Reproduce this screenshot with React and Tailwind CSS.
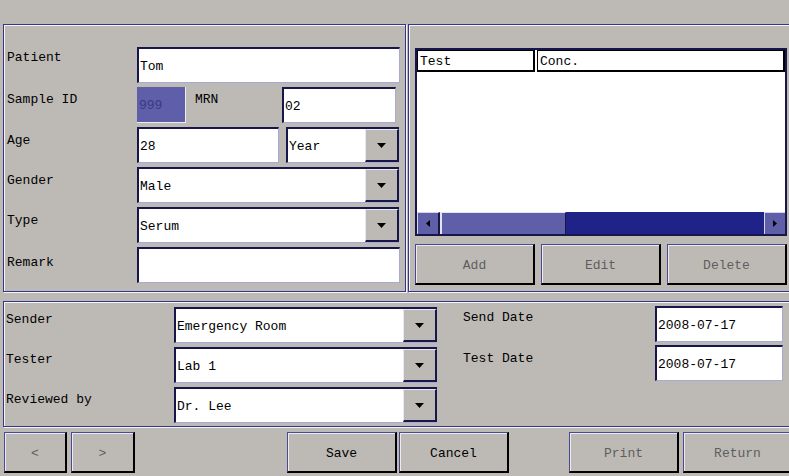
import React from 'react';

const sunken =
  'bg-white border-t-2 border-l-2 border-b border-r border-t-[#16164a] border-l-[#16164a] border-b-[#a9a9d6] border-r-[#a9a9d6]';

const Field = ({ value, className = '' }) => (
  <div className={`h-[36px] shrink-0 flex items-center pl-[1px] pt-[2px] ${sunken} ${className}`}>
    {value}
  </div>
);

const Arrow = () => (
  <svg width="9" height="5" viewBox="0 0 9 5">
    <polygon points="0,0 9,0 4.5,5" fill="#000" />
  </svg>
);

const Select = ({ value, className = '' }) => (
  <div
    className={`h-[36px] shrink-0 flex bg-white border-t-2 border-l-2 border-b border-t-[#16164a] border-l-[#16164a] border-b-[#a9a9d6] ${className}`}
  >
    <div className="flex-1 flex items-center pl-[1px] pt-[2px]">{value}</div>
    <div className="w-[34px] h-full flex items-center justify-center bg-[#bdbab6] border-l border-t border-l-[#e8e8f4] border-t-[#e8e8f4] border-r-2 border-b-2 border-r-[#16164a] border-b-[#16164a]">
      <Arrow />
    </div>
  </div>
);

const Button = ({ label, disabled, className = '' }) => (
  <div
    className={`h-[41px] shrink-0 flex items-center justify-center pt-[3px] bg-[#bdbab6] border-t border-l border-t-[#4a4a94] border-l-[#4a4a94] border-b-2 border-r-2 border-b-black border-r-black shadow-[inset_1px_1px_0_#ecebf2] ${
      disabled ? 'text-[#5e5e5e]' : 'text-black'
    } ${className}`}
  >
    {label}
  </div>
);

const Label = ({ children, className = '' }) => (
  <div className={`leading-[16px] shrink-0 ${className}`}>{children}</div>
);

const panel =
  'border border-[#35358a] shadow-[inset_1px_1px_0_#f4f4fa,1px_1px_0_#f4f4fa]';

export default function App() {
  return (
    <div className="w-[789px] h-[476px] overflow-hidden bg-[#bdbab6] text-[13px] text-black font-['Liberation_Mono',monospace]">
      {/* top area */}
      <div className="flex gap-[2px] pt-[24px] pl-[3px] h-[292px]">
        {/* patient info */}
        <div className={`w-[403px] h-[268px] shrink-0 pl-[3px] pt-[22px] flex flex-col gap-[4px] ${panel}`}>
          <div className="flex">
            <Label className="w-[130px] pt-[3px]">Patient</Label>
            <Field value="Tom" className="w-[263px]" />
          </div>
          <div className="flex">
            <Label className="w-[130px] pt-[5px]">Sample ID</Label>
            <div className="w-[49px] h-[36px] shrink-0 flex items-center pl-[2px] pt-[2px] bg-[#5f5ea8] text-[#3a3a82] border-r border-b border-[#ecebf2]">
              999
            </div>
            <Label className="w-[96px] pl-[9px] pt-[5px]">MRN</Label>
            <Field value="02" className="w-[114px]" />
          </div>
          <div className="flex">
            <Label className="w-[130px] pt-[6px]">Age</Label>
            <Field value="28" className="w-[142px]" />
            <Select value="Year" className="w-[113px] ml-[7px]" />
          </div>
          <div className="flex">
            <Label className="w-[130px] pt-[6px]">Gender</Label>
            <Select value="Male" className="w-[262px]" />
          </div>
          <div className="flex">
            <Label className="w-[130px] pt-[6px]">Type</Label>
            <Select value="Serum" className="w-[262px]" />
          </div>
          <div className="flex">
            <Label className="w-[130px] pt-[8px]">Remark</Label>
            <Field value="" className="w-[263px]" />
          </div>
        </div>

        {/* test list */}
        <div className={`w-[384px] h-[268px] shrink-0 pl-[6px] pt-[23px] ${panel}`}>
          <div className="w-[372px] h-[188px] flex flex-col bg-white border-2 border-[#16164a]">
            <div className="flex h-[22px] shrink-0">
              <div className="w-[118px] flex items-center pl-[2px] pt-[3px] border-t border-l border-b-2 border-r-2 border-black">
                Test
              </div>
              <div className="w-[248px] ml-[2px] flex items-center pl-[2px] pt-[3px] border-t border-l border-b-2 border-r-2 border-black">
                Conc.
              </div>
            </div>
            <div className="flex-1" />
            <div className="h-[22px] shrink-0 flex bg-[#1f2388]">
              <div className="w-[23px] h-full flex items-center justify-center bg-[#5f5ea8] border-t border-l border-[#d4d4ec] border-r-2 border-r-[#16164a]">
                <svg width="4" height="7" viewBox="0 0 4 7">
                  <polygon points="4,0 4,7 0,3.5" fill="#000" />
                </svg>
              </div>
              <div className="w-[126px] h-full bg-[#5f5ea8] border-l-2 border-t border-[#e4e4f4] border-r border-r-[#16164a]" />
              <div className="flex-1" />
              <div className="w-[21px] h-full flex items-center justify-center bg-[#5f5ea8] border-t border-l border-[#d4d4ec]">
                <svg width="4" height="7" viewBox="0 0 4 7">
                  <polygon points="0,0 0,7 4,3.5" fill="#000" />
                </svg>
              </div>
            </div>
          </div>
          <div className="flex gap-[6px] mt-[8px]">
            <Button label="Add" disabled className="w-[120px]" />
            <Button label="Edit" disabled className="w-[120px]" />
            <Button label="Delete" disabled className="w-[120px]" />
          </div>
        </div>
      </div>

      {/* sender info */}
      <div className={`mt-[9px] ml-[3px] w-[788px] h-[126px] flex ${panel}`}>
        <div className="flex flex-col gap-[4px] pt-[5px] pl-[2px]">
          <div className="flex">
            <Label className="w-[168px] pt-[5px]">Sender</Label>
            <Select value="Emergency Room" className="w-[263px]" />
          </div>
          <div className="flex">
            <Label className="w-[168px] pt-[5px]">Tester</Label>
            <Select value="Lab 1" className="w-[263px]" />
          </div>
          <div className="flex">
            <Label className="w-[168px] pt-[5px]">Reviewed by</Label>
            <Select value="Dr. Lee" className="w-[263px]" />
          </div>
        </div>
        <div className="flex flex-col gap-[3px] pt-[4px] ml-[26px]">
          <div className="flex">
            <Label className="w-[192px] pt-[4px]">Send Date</Label>
            <Field value="2008-07-17" className="w-[128px]" />
          </div>
          <div className="flex">
            <Label className="w-[192px] pt-[6px]">Test Date</Label>
            <Field value="2008-07-17" className="w-[128px]" />
          </div>
        </div>
      </div>

      {/* actions */}
      <div className="flex mt-[5px] pl-[4px]">
        <Button label="<" disabled className="w-[63px]" />
        <Button label=">" disabled className="w-[64px] ml-[4px]" />
        <Button label="Save" className="w-[110px] ml-[152px]" />
        <Button label="Cancel" className="w-[110px] ml-[2px]" />
        <Button label="Print" disabled className="w-[110px] ml-[60px]" />
        <Button label="Return" disabled className="w-[110px] ml-[4px]" />
      </div>
    </div>
  );
}
